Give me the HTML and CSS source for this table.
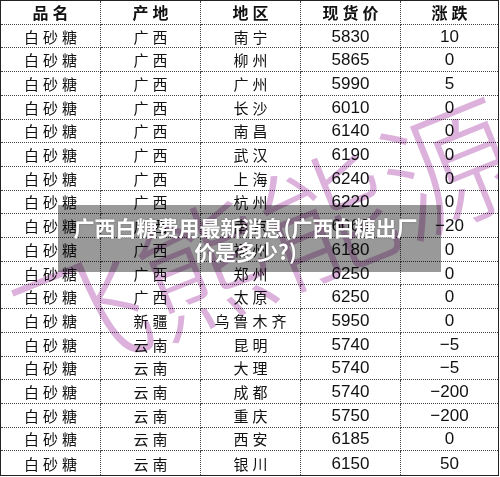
FILE: index.html
```html
<!DOCTYPE html>
<html lang="zh">
<head>
<meta charset="utf-8">
<link rel="stylesheet" href="styles.css">
</head>
<body>
<div class="frame">
  <div class="tbl">
    <div class="c h">品名</div><div class="c h">产地</div><div class="c h">地区</div><div class="c h">现货价</div><div class="c h">涨跌</div>
    <div class="c">白砂糖</div><div class="c">广西</div><div class="c">南宁</div><div class="c n">5830</div><div class="c n">10</div>
    <div class="c">白砂糖</div><div class="c">广西</div><div class="c">柳州</div><div class="c n">5865</div><div class="c n">0</div>
    <div class="c">白砂糖</div><div class="c">广西</div><div class="c">广州</div><div class="c n">5990</div><div class="c n">5</div>
    <div class="c">白砂糖</div><div class="c">广西</div><div class="c">长沙</div><div class="c n">6010</div><div class="c n">0</div>
    <div class="c">白砂糖</div><div class="c">广西</div><div class="c">南昌</div><div class="c n">6140</div><div class="c n">0</div>
    <div class="c">白砂糖</div><div class="c">广西</div><div class="c">武汉</div><div class="c n">6190</div><div class="c n">0</div>
    <div class="c">白砂糖</div><div class="c">广西</div><div class="c">上海</div><div class="c n">6240</div><div class="c n">0</div>
    <div class="c">白砂糖</div><div class="c">广西</div><div class="c">杭州</div><div class="c n">6220</div><div class="c n">0</div>
    <div class="c">白砂糖</div><div class="c">广西</div><div class="c">南京</div><div class="c n">6060</div><div class="c n">−20</div>
    <div class="c">白砂糖</div><div class="c">广西</div><div class="c">福州</div><div class="c n">6180</div><div class="c n">0</div>
    <div class="c">白砂糖</div><div class="c">广西</div><div class="c">郑州</div><div class="c n">6250</div><div class="c n">0</div>
    <div class="c">白砂糖</div><div class="c">广西</div><div class="c">太原</div><div class="c n">6250</div><div class="c n">0</div>
    <div class="c">白砂糖</div><div class="c">新疆</div><div class="c">乌鲁木齐</div><div class="c n">5950</div><div class="c n">0</div>
    <div class="c">白砂糖</div><div class="c">云南</div><div class="c">昆明</div><div class="c n">5740</div><div class="c n">−5</div>
    <div class="c">白砂糖</div><div class="c">云南</div><div class="c">大理</div><div class="c n">5740</div><div class="c n">−5</div>
    <div class="c">白砂糖</div><div class="c">云南</div><div class="c">成都</div><div class="c n">5740</div><div class="c n">−200</div>
    <div class="c">白砂糖</div><div class="c">云南</div><div class="c">重庆</div><div class="c n">5750</div><div class="c n">−200</div>
    <div class="c">白砂糖</div><div class="c">云南</div><div class="c">西安</div><div class="c n">6185</div><div class="c n">0</div>
    <div class="c last">白砂糖</div><div class="c last">云南</div><div class="c last">银川</div><div class="c n last">6150</div><div class="c n last">50</div>
  </div>
  <div class="mark">飞熊能源</div>
  <div class="caption">广西白糖费用最新消息(广西白糖出厂<br>价是多少?)</div>
</div>
</body>
</html>
```

FILE: styles.css
```css
html, body {
  margin: 0;
  padding: 0;
  background: #fff;
}
.frame {
  position: relative;
  width: 499px;
  height: 476px;
  overflow: hidden;
}
.tbl {
  display: grid;
  grid-template-columns: 100px 100px 100px 100px 97px;
  grid-template-rows: repeat(20, 1fr);
  width: 499px;
  height: 476px;
  box-sizing: border-box;
  border: 1px solid #222;
  font-family: "Noto Sans CJK SC", sans-serif;
  color: #111;
}
.c {
  display: flex;
  align-items: center;
  justify-content: center;
  border-right: 1px dotted #444;
  border-bottom: 1px dotted #444;
  font-size: 15px;
  font-weight: 400;
  letter-spacing: 4px;
  padding-left: 4px;
  box-sizing: border-box;
  line-height: 1;
  overflow: hidden;
}
.c:nth-child(5n) {
  border-right: none;
}
.c.last {
  border-bottom: none;
}
.h {
  font-size: 16px;
  font-weight: 700;
}
.n {
  font-family: "Liberation Sans", Arial, sans-serif;
  font-weight: 400;
  font-size: 17px;
  letter-spacing: 0;
  padding-left: 0;
}
.mark {
  position: absolute;
  left: 0;
  top: 170px;
  width: 520px;
  text-align: center;
  font-family: "Noto Sans CJK SC", sans-serif;
  font-size: 132px;
  font-weight: 300;
  line-height: 140px;
  color: #dcb2dc;
  transform: rotate(-22deg);
  transform-origin: 255px 70px;
  mix-blend-mode: multiply;
  white-space: nowrap;
  pointer-events: none;
}
.caption {
  position: absolute;
  left: 58px;
  top: 205px;
  width: 383px;
  height: 67px;
  box-sizing: border-box;
  padding-top: 10px;
  padding-right: 8px;
  background: rgba(0, 0, 0, 0.4);
  color: #fff;
  font-family: "Noto Sans CJK SC", sans-serif;
  font-weight: 700;
  font-size: 21px;
  line-height: 24px;
  text-align: center;
  white-space: nowrap;
  text-shadow: 0 0 2px rgba(0, 0, 0, 0.3);
}
```
